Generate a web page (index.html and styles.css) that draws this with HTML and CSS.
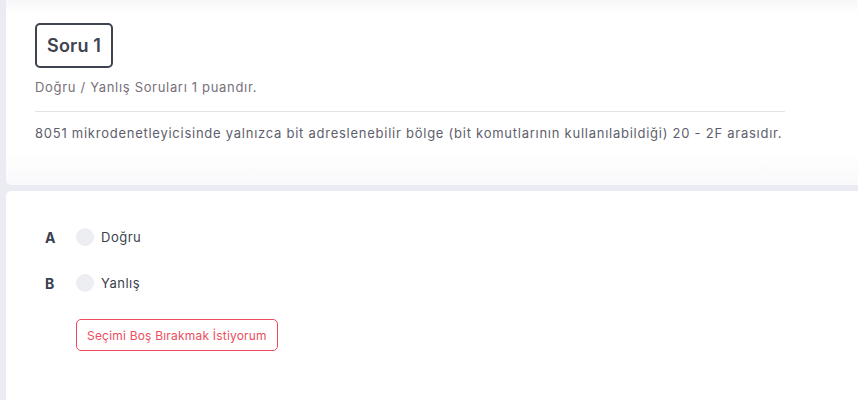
FILE: index.html
```html
<!DOCTYPE html>
<html lang="tr">
<head>
<meta charset="utf-8">
<link rel="stylesheet" href="styles.css">
</head>
<body>
<div class="page">
  <section class="card question">
    <div class="title">Soru 1</div>
    <p class="hint">Doğru / Yanlış Soruları 1 puandır.</p>
    <hr class="divider">
    <p class="text">8051 mikrodenetleyicisinde yalnızca bit adreslenebilir bölge (bit komutlarının kullanılabildiği) 20 - 2F arasıdır.</p>
  </section>
  <section class="card answers">
    <div class="option">
      <span class="letter">A</span>
      <span class="radio"></span>
      <span class="label">Doğru</span>
    </div>
    <div class="option">
      <span class="letter">B</span>
      <span class="radio"></span>
      <span class="label">Yanlış</span>
    </div>
    <button class="skip">Seçimi Boş Bırakmak İstiyorum</button>
  </section>
</div>
</body>
</html>
```

FILE: styles.css
```css
html, body {
  margin: 0;
  padding: 0;
  background: #ebebf4;
  font-family: "Inter", "Noto Sans", sans-serif;
}
.page {
  padding-left: 6px;
  display: flex;
  flex-direction: column;
  gap: 6px;
  height: 400px;
  overflow: hidden;
}
.card {
  background: #fff;
  border-radius: 0 0 0 5px;
}
.question {
  height: 185px;
  box-sizing: border-box;
  padding: 23px 0 0 29px;
  background: linear-gradient(#f7f7f9 0, #fff 14px, #fff 150px, #f9f9fb 185px);
}
.title {
  display: inline-block;
  border: 2px solid #3e4350;
  border-radius: 5px;
  padding: 0 10px;
  height: 41px;
  line-height: 41px;
  font-size: 18px;
  font-weight: 600;
  letter-spacing: 0.2px;
  color: #3e4350;
}
.hint {
  margin: 10px 0 0;
  font-size: 13px;
  line-height: 18px;
  letter-spacing: 0.68px;
  color: #77707a;
}
.divider {
  margin: 15px 0 0;
  width: 750px;
  border: 0;
  border-top: 1px solid #e3e3e6;
}
.text {
  margin: 12px 0 0;
  font-size: 13px;
  line-height: 18px;
  letter-spacing: 0.745px;
  color: #5e5e6c;
}
.answers {
  flex: 1;
  border-radius: 5px 0 0 0;
  padding: 37px 0 0 39px;
}
.option {
  display: flex;
  align-items: center;
  height: 18px;
  margin-bottom: 28px;
}
.letter {
  width: 31px;
  font-size: 14px;
  font-weight: 700;
  color: #3a3f4e;
}
.radio {
  width: 18px;
  height: 18px;
  border-radius: 50%;
  background: #eceef2;
}
.label {
  margin-left: 7px;
  font-size: 13px;
  letter-spacing: 0.5px;
  color: #3a3f4e;
}
.skip {
  margin: -1px 0 0 31px;
  height: 32px;
  padding: 0 10px;
  background: #fff;
  border: 1px solid #f04b5c;
  border-radius: 5px;
  color: #ec4d5d;
  font-family: inherit;
  font-size: 12px;
  letter-spacing: 0.2px;
}
```
